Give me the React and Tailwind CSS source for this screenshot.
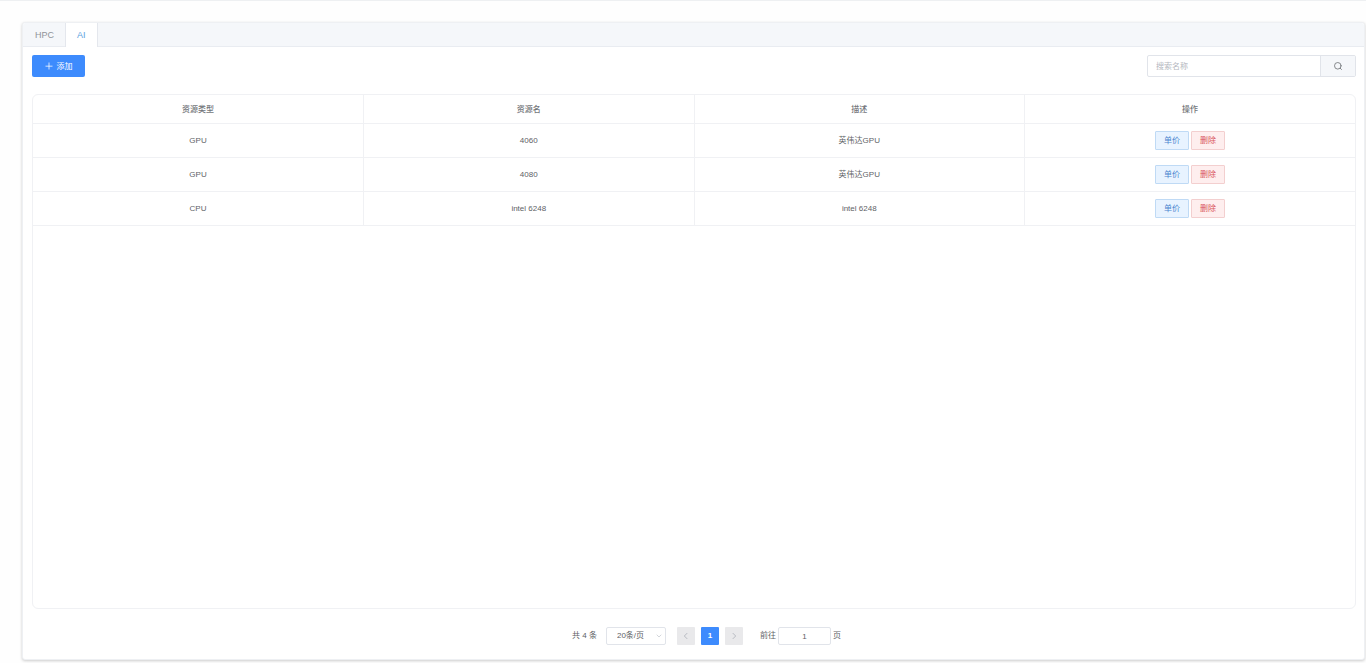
import React, { useState } from "react";

const tabs = ["HPC", "AI"];

const columns = ["资源类型", "资源名", "描述", "操作"];

const resources = [
    { id: 1, type: "GPU", name: "4060", description: "英伟达GPU" },
    { id: 2, type: "GPU", name: "4080", description: "英伟达GPU" },
    { id: 3, type: "CPU", name: "intel 6248", description: "intel 6248" },
];

function PlusIcon() {
    return (
        <svg viewBox="0 0 1024 1024" className="w-2 h-2" fill="currentColor" aria-hidden="true">
            <path d="M464 64h96v400h400v96H560v400h-96V560H64v-96h400z" />
        </svg>
    );
}

function SearchIcon() {
    return (
        <svg viewBox="0 0 16 16" className="w-2 h-2" fill="none" stroke="currentColor" strokeWidth="1.7" strokeLinecap="round" aria-hidden="true">
            <circle cx="7.6" cy="7.6" r="6.6" />
            <path d="M12.4 12.4L15 15" />
        </svg>
    );
}

function Chevron({ d, className }) {
    return (
        <svg viewBox="0 0 12 12" className={className} fill="none" stroke="currentColor" strokeWidth="1.4" strokeLinecap="round" strokeLinejoin="round" aria-hidden="true">
            <path d={d} />
        </svg>
    );
}

function Tabs({ active, onChange }) {
    return (
        <div role="tablist" className="flex h-6 shrink-0 rounded-t-[3px] border-b border-[#e9ecf1] bg-[#f5f7fa] text-[9px]">
            {tabs.map((tab) => (
                <button
                    key={tab}
                    role="tab"
                    aria-selected={tab === active}
                    onClick={() => onChange(tab)}
                    className={
                        tab === active
                            ? "h-6 px-[11px] border-x border-[#e4e7ed] bg-white text-[#5c9fe0]"
                            : "h-6 pr-[11px] pl-3 text-[#909399]"
                    }
                >
                    {tab}
                </button>
            ))}
        </div>
    );
}

function Toolbar() {
    return (
        <div className="flex items-center justify-between">
            <button className="flex h-[22px] w-[53px] items-center justify-center gap-1 rounded-[2px] bg-[#3d8bfd] text-white">
                <PlusIcon />
                <span className="pt-px">添加</span>
            </button>
            <div className="flex h-[22px] w-[209px] overflow-hidden rounded-[2px] border border-[#e1e4ea]">
                <input
                    type="text"
                    aria-label="搜索名称"
                    placeholder="搜索名称"
                    className="min-w-0 flex-1 px-2 pt-px outline-none placeholder:text-[#b4b7be]"
                />
                <button aria-label="搜索" className="flex w-[35px] items-center justify-center border-l border-[#e1e4ea] bg-[#f5f7fa] text-[#73767a]">
                    <SearchIcon />
                </button>
            </div>
        </div>
    );
}

function ResourceTable() {
    return (
        <div className="mt-[17px] min-h-0 flex-1 overflow-auto rounded-md border border-[#f0f1f4]">
            <table className="w-full table-fixed text-center">
                <thead>
                    <tr className="h-7 border-b border-[#f0f1f4] text-[#73767a]">
                        {columns.map((column) => (
                            <th key={column} className="border-r border-[#f0f1f4] pt-0.5 font-medium last:border-r-0">{column}</th>
                        ))}
                    </tr>
                </thead>
                <tbody>
                    {resources.map((item) => (
                        <tr key={item.id} className="h-[34px] border-b border-[#f0f1f4]">
                            <td className="border-r border-[#f0f1f4] pt-0.5">{item.type}</td>
                            <td className="border-r border-[#f0f1f4] pt-0.5">{item.name}</td>
                            <td className="border-r border-[#f0f1f4] pt-0.5">{item.description}</td>
                            <td>
                                <div className="flex justify-center gap-0.5">
                                    <button className="h-[19px] w-[34px] rounded-[1px] border border-[#bfdaf5] bg-[#e8f3ff] pt-px text-[#4a86cf]">单价</button>
                                    <button className="h-[19px] w-[34px] rounded-[1px] border border-[#f3cfcf] bg-[#feeeee] pt-px text-[#d9555a]">删除</button>
                                </div>
                            </td>
                        </tr>
                    ))}
                </tbody>
            </table>
        </div>
    );
}

function Pagination() {
    return (
        <div className="flex items-center justify-center pt-[18px] pb-[14px] pl-[25px]">
            <span className="mr-[9px]">共 4 条</span>
            <div className="relative mr-[11px]">
                <select aria-label="每页条数" defaultValue="20" className="block h-[18px] w-[60px] appearance-none rounded-[2px] border border-[#e1e4ea] pl-[10px]">
                    <option value="10">10条/页</option>
                    <option value="20">20条/页</option>
                    <option value="50">50条/页</option>
                </select>
                <Chevron d="M2 4l4 4 4-4" className="pointer-events-none absolute right-1 top-1.5 h-1.5 w-1.5 text-[#c0c4cc]" />
            </div>
            <div className="flex gap-1.5">
                <button aria-label="上一页" disabled className="flex h-[18px] w-[18px] items-center justify-center rounded-[1px] bg-[#e9e9eb] text-[#b4b7be]">
                    <Chevron d="M7.5 2L3.5 6l4 4" className="h-2 w-2" />
                </button>
                <button aria-current="page" className="h-[18px] w-[18px] rounded-[1px] bg-[#3d8bfd] font-bold text-white">1</button>
                <button aria-label="下一页" disabled className="flex h-[18px] w-[18px] items-center justify-center rounded-[1px] bg-[#e9e9eb] text-[#b4b7be]">
                    <Chevron d="M4.5 2l4 4-4 4" className="h-2 w-2" />
                </button>
            </div>
            <label className="ml-[17px] flex items-center gap-0.5">
                前往
                <input type="text" defaultValue="1" className="h-[18px] w-[53px] rounded-[2px] border border-[#e1e4ea] text-center outline-none" />
                页
            </label>
        </div>
    );
}

function App() {
    const [active, setActive] = useState("AI");

    return (
        <div className="flex h-screen flex-col border-t border-[#eef0f2] bg-[#fefefe] pt-[21px] pr-px pb-[3px] pl-[22px] font-['Liberation_Sans','Noto_Sans_CJK_SC',sans-serif] text-[8px] leading-3 text-[#606266]">
            <div className="flex min-h-0 flex-1 flex-col rounded-[3px] border border-[#eef0f3] bg-white shadow-[0_1px_3px_rgba(0,0,0,0.2)]">
                <Tabs active={active} onChange={setActive} />
                <div className="flex min-h-0 flex-1 flex-col pt-2 pr-2 pl-[9px]">
                    <Toolbar />
                    <ResourceTable />
                    <Pagination />
                </div>
            </div>
        </div>
    );
}

export default App;
